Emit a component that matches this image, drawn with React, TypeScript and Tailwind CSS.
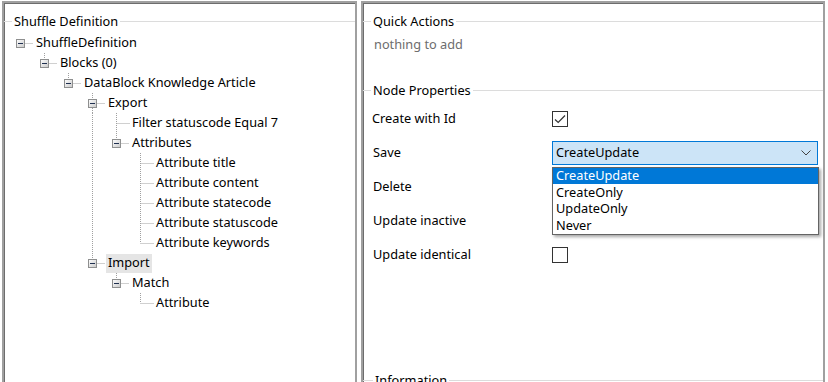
import React from "react";

type TreeNode = { label: string; children?: TreeNode[]; selected?: boolean };

type Row = {
  depth: number;
  label: string;
  expandable: boolean;
  isLast: boolean;
  ancestorNext: boolean[];
  selected?: boolean;
};

const shuffleTree: TreeNode = {
  label: "ShuffleDefinition",
  children: [
    {
      label: "Blocks (0)",
      children: [
        {
          label: "DataBlock Knowledge Article",
          children: [
            {
              label: "Export",
              children: [
                { label: "Filter statuscode Equal 7" },
                {
                  label: "Attributes",
                  children: [
                    { label: "Attribute title" },
                    { label: "Attribute content" },
                    { label: "Attribute statecode" },
                    { label: "Attribute statuscode" },
                    { label: "Attribute keywords" },
                  ],
                },
              ],
            },
            {
              label: "Import",
              selected: true,
              children: [
                { label: "Match", children: [{ label: "Attribute" }] },
              ],
            },
          ],
        },
      ],
    },
  ],
};

// aplanamos el arbol para dibujar una fila por nodo
function flatten(
  node: TreeNode,
  depth: number,
  isLast: boolean,
  ancestorNext: boolean[],
  rows: Row[]
) {
  rows.push({
    depth,
    label: node.label,
    expandable: !!node.children?.length,
    isLast,
    ancestorNext,
    selected: node.selected,
  });
  const kids = node.children ?? [];
  kids.forEach((child, i) =>
    flatten(
      child,
      depth + 1,
      i === kids.length - 1,
      depth === 0 ? [] : [...ancestorNext, !isLast],
      rows
    )
  );
}

const rows: Row[] = [];
flatten(shuffleTree, 0, true, [], rows);

const DOT = "#a0a0a0";

function Connector({ row }: { row: Row }) {
  const cx = (k: number) => 16.5 + 24 * k;
  const c = cx(row.depth);
  const width = 30 + 24 * row.depth;
  return (
    <svg width={width} height={20} className="shrink-0">
      <defs>
        <linearGradient id="exp" x1="0" y1="0" x2="1" y2="1">
          <stop offset="0" stopColor="#ffffff" />
          <stop offset="1" stopColor="#c8c8c8" />
        </linearGradient>
      </defs>
      {/* lineas de ancestros con hermanos siguientes */}
      {row.ancestorNext.map((next, i) =>
        next ? (
          <line
            key={i}
            x1={cx(i + 1)}
            y1={0}
            x2={cx(i + 1)}
            y2={20}
            stroke={DOT}
            strokeDasharray="1 1"
          />
        ) : null
      )}
      {row.depth > 0 && (
        <>
          <line
            x1={c}
            y1={0}
            x2={c}
            y2={row.expandable ? 6 : 10}
            stroke={DOT}
            strokeDasharray="1 1"
          />
          {!row.isLast && (
            <line
              x1={c}
              y1={row.expandable ? 15 : 10}
              x2={c}
              y2={20}
              stroke={DOT}
              strokeDasharray="1 1"
            />
          )}
        </>
      )}
      <line
        x1={row.expandable ? c + 5 : c}
        y1={10.5}
        x2={c + 13}
        y2={10.5}
        stroke={DOT}
        strokeDasharray="1 1"
      />
      {row.expandable && (
        <>
          <rect
            x={c - 4}
            y={6.5}
            width={8}
            height={8}
            fill="url(#exp)"
            stroke="#8e8f8f"
          />
          <line x1={c - 2.5} y1={10.5} x2={c + 2.5} y2={10.5} stroke="#1f3050" />
        </>
      )}
    </svg>
  );
}

function GroupHeader({ title, className }: { title: string; className?: string }) {
  return (
    <div className={"flex items-center h-[16px] " + (className ?? "")}>
      <div className="w-[8px] h-px bg-[#dcdcdc]" />
      <span className="px-[2px] leading-none whitespace-nowrap">{title}</span>
      <div className="flex-1 h-px bg-[#dcdcdc]" />
    </div>
  );
}

function Checkbox({ checked }: { checked?: boolean }) {
  return (
    <div className="w-[16px] h-[16px] border border-[#333333] bg-white flex items-center justify-center">
      {checked && (
        <svg width="12" height="10" viewBox="0 0 12 10">
          <path d="M1 5.5 L4.2 8.5 L11 1.5" fill="none" stroke="#333333" strokeWidth="1.2" />
        </svg>
      )}
    </div>
  );
}

const saveOptions = ["CreateUpdate", "CreateOnly", "UpdateOnly", "Never"];

export default function App() {
  return (
    <div
      className="w-[828px] h-[382px] overflow-hidden bg-white text-[12.75px] text-black flex gap-[4px] pl-[2px] pt-[1px]"
      style={{ fontFamily: '"Noto Sans", "Open Sans", sans-serif' }}
    >
      {/* Panel izquierdo: definicion */}
      <div className="w-[355px] h-[420px] shrink-0 border-2 border-[#a0a0a0] shadow-[inset_1px_1px_0_#6d6d6d]">
        <GroupHeader title="Shuffle Definition" className="mt-[10px]" />
        <div className="mt-[4px] flex flex-col">
          {rows.map((row, i) => (
            <div key={i + row.label} className="flex items-center h-[20px]">
              <Connector row={row} />
              <span
                className={
                  "px-[2px] h-[19px] flex items-center whitespace-nowrap " +
                  (row.selected ? "bg-[#e5e5e5]" : "")
                }
              >
                {row.label}
              </span>
            </div>
          ))}
        </div>
      </div>

      {/* Panel derecho: acciones y propiedades */}
      <div className="w-[464px] h-[420px] shrink-0 border-2 border-[#a0a0a0] shadow-[inset_1px_1px_0_#6d6d6d] flex flex-col">
        <GroupHeader title="Quick Actions" className="mt-[10px]" />
        <div className="mt-[6px] h-[20px] flex items-center pl-[11px] text-[#6d6d6d]">
          nothing to add
        </div>
        <GroupHeader title="Node Properties" className="mt-[27px]" />
        <div className="mt-[4px] flex flex-col">
          <div className="h-[34px] flex items-center">
            <span className="w-[189px] pl-[9px]">Create with Id</span>
            <Checkbox checked />
          </div>
          <div className="h-[34px] flex items-center">
            <span className="w-[189px] pl-[10px]">Save</span>
            <div className="relative z-10">
              <div className="w-[266px] h-[24px] border border-[#0078d7] bg-[#cce4f7] flex items-center justify-between pl-[3px] pr-[6px]">
                <span>CreateUpdate</span>
                <svg width="10" height="6" viewBox="0 0 10 6">
                  <path d="M0.5 0.5 L5 5 L9.5 0.5" fill="none" stroke="#444444" />
                </svg>
              </div>
              {/* lista desplegada */}
              <div className="absolute left-0 top-[26px] w-[267px] border border-[#646464] bg-white shadow-[2px_2px_3px_rgba(0,0,0,0.35)] flex flex-col">
                {saveOptions.map((opt, i) => (
                  <div
                    key={opt}
                    className={
                      "flex items-center pl-[3px] " +
                      (i === 0 ? "h-[16px] bg-[#0078d7] text-white" : "h-[16.5px]")
                    }
                  >
                    {opt}
                  </div>
                ))}
              </div>
            </div>
          </div>
          <div className="h-[34px] flex items-center">
            <span className="w-[189px] pl-[10px]">Delete</span>
            <Checkbox />
          </div>
          <div className="h-[34px] flex items-center">
            <span className="w-[189px] pl-[10px]">Update inactive</span>
            <Checkbox />
          </div>
          <div className="h-[34px] flex items-center">
            <span className="w-[189px] pl-[10px]">Update identical</span>
            <Checkbox />
          </div>
        </div>
        <GroupHeader title="Information" className="mt-[100px] [&>div:first-child]:w-[10px]" />
      </div>
    </div>
  );
}
